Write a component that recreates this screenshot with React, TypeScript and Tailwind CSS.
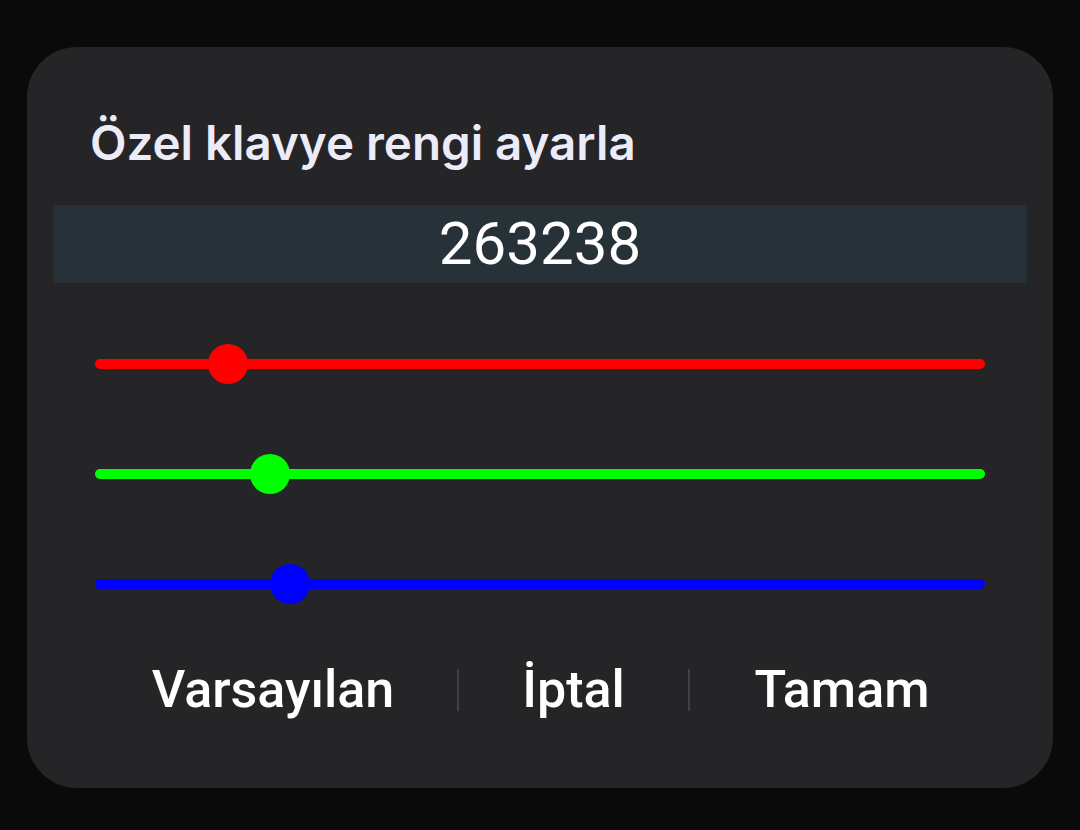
import React, { useState } from "react";

const channels = [
  { key: "r", color: "#ff0000", value: 0x26 },
  { key: "g", color: "#00ff00", value: 0x32 },
  { key: "b", color: "#0000ff", value: 0x38 },
];

const ColorSlider = ({ color, value }: { color: string; value: number }) => {
  const pct = (value / 255) * 100;
  return (
    <div className="relative h-10 w-full">
      <div
        className="absolute left-0 right-0 top-[15px] h-[10px] rounded-full"
        style={{ backgroundColor: color }}
      />
      <div
        className="absolute top-0 h-10 w-10 -translate-x-1/2 rounded-full"
        style={{ left: `${pct}%`, backgroundColor: color }}
      />
    </div>
  );
};

const App = () => {
  const [values] = useState(channels);
  const hex = values
    .map((c) => c.value.toString(16).padStart(2, "0"))
    .join("")
    .toUpperCase();

  return (
    <div className="min-h-[830px] w-full bg-[#0a0a0a] px-[27px] pt-[47px] font-['Roboto',sans-serif]">
      <div className="flex h-[741px] w-[1026px] flex-col rounded-[50px] bg-[#252527]">
        <h1 className="pl-[63px] pt-[70px] font-['Inter',sans-serif] text-[47.5px] font-semibold leading-[52px] text-[#ececf8]">
          Özel klavye rengi ayarla
        </h1>
        <div className="mx-[26px] mt-[36px] flex h-[78px] items-center justify-center bg-[#263238]">
          <span className="text-[60px] font-normal leading-none text-white">{hex}</span>
        </div>
        <div className="mt-[61px] flex flex-col gap-[70px] px-[68px]">
          {values.map((c) => (
            <ColorSlider key={c.key} color={c.color} value={c.value} />
          ))}
        </div>
        <div className="mt-[60px] flex items-center pl-[62px]">
          <button className="w-[368px] text-center text-[52px] font-medium leading-none text-white">
            Varsayılan
          </button>
          <div className="h-[42px] w-[2px] bg-[#404044]" />
          <button className="w-[229px] text-center text-[52px] font-medium leading-none text-white">
            İptal
          </button>
          <div className="h-[42px] w-[2px] bg-[#404044]" />
          <button className="w-[304px] text-center text-[52px] font-medium leading-none text-white">
            Tamam
          </button>
        </div>
      </div>
    </div>
  );
};

export default App;
